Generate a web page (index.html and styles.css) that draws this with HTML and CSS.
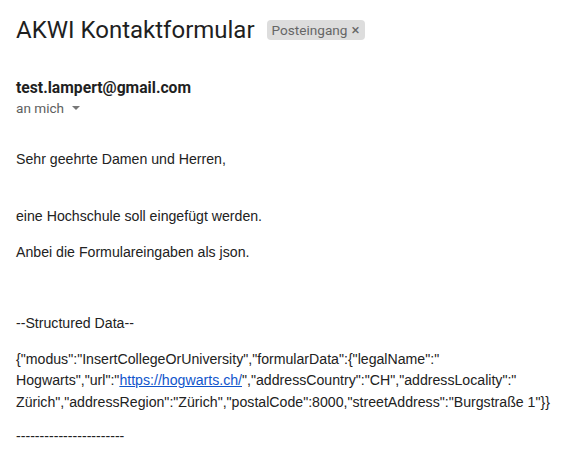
FILE: index.html
```html
<!DOCTYPE html>
<html lang="de">
<head>
<meta charset="utf-8">
<title>AKWI Kontaktformular</title>
<link rel="stylesheet" href="styles.css">
</head>
<body>
<div class="page">
  <header class="subject">
    <h1 class="title">AKWI Kontaktformular</h1>
    <span class="label">Posteingang <span class="label-x">×</span></span>
  </header>
  <div class="sender">
    <div class="from">test.lampert@gmail.com</div>
    <div class="to">an mich <span class="caret"></span></div>
  </div>
  <div class="body">
    <p class="p1">Sehr geehrte Damen und Herren,</p>
    <p class="p2">eine Hochschule soll eingefügt werden.</p>
    <p class="p3">Anbei die Formulareingaben als json.</p>
    <p class="p4">--Structured Data--</p>
    <p class="json">{"modus":"InsertCollegeOrUniversity","formularData":{"legalName":"<br>Hogwarts","url":"<a href="#">https://hogwarts.ch/</a>","addressCountry":"CH","addressLocality":"<br>Zürich","addressRegion":"Zürich","postalCode":8000,"streetAddress":"Burgstraße 1"}}</p>
    <p class="dash">-----------------------</p>
  </div>
</div>
</body>
</html>
```
FILE: styles.css
```css
html, body { margin: 0; padding: 0; background: #fff; }
.page { padding: 0 16px; }
.subject { display: flex; align-items: center; gap: 12px; padding-top: 15px; height: 30px; }
.title { margin: 0; font-family: Roboto, "Open Sans", sans-serif; font-weight: 400; font-size: 24px; line-height: 30px; color: #1f1f1f; }
.label { display: inline-flex; align-items: center; height: 20px; padding: 0 6px 0 5px; background: #ddd; border-radius: 4px; font-family: Roboto, sans-serif; font-size: 13.6px; color: #666; }
.label-x { margin-left: 4px; font-size: 15px; }
.sender { margin-top: 32px; font-family: Roboto, sans-serif; }
.from { font-size: 15.7px; font-weight: 700; color: #1f1f1f; line-height: 21px; }
.to { font-size: 13.6px; color: #5e5e5e; line-height: 20px; display: flex; align-items: center; gap: 8px; }
.caret { width: 0; height: 0; border-left: 4.5px solid transparent; border-right: 4.5px solid transparent; border-top: 4.5px solid #777; }
.body { font-family: "Liberation Sans", Arial, sans-serif; font-size: 14.15px; color: #222; line-height: 21.6px; margin-top: 30.5px; }
.body p { margin: 0; }
.p2 { margin-top: 36px !important; }
.p3 { margin-top: 14px !important; }
.p4 { margin-top: 50px !important; }
.json { margin-top: 14px !important; }
.json a { color: #1155cc; }
.dash { margin-top: 12.5px !important; }
```
